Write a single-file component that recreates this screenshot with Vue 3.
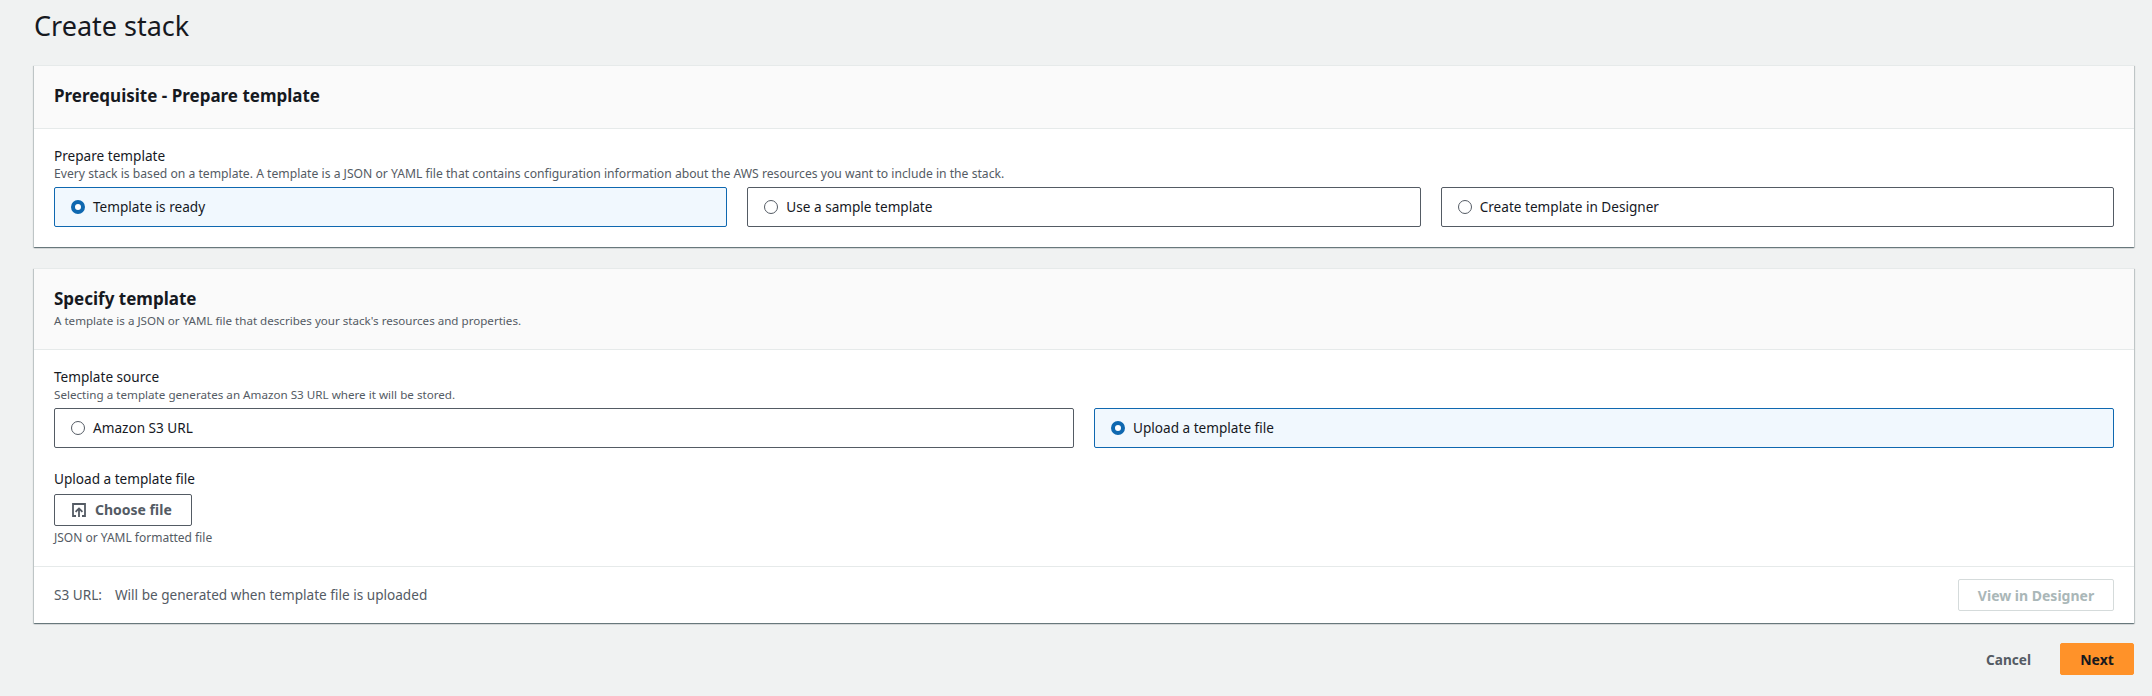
<template>
  <div class="page">
    <h1 class="title">Create stack</h1>

    <section class="card first">
      <header class="card-head prereq">
        <h2>Prerequisite - Prepare template</h2>
      </header>
      <div class="card-body">
        <div class="label">Prepare template</div>
        <div class="hint wide">Every stack is based on a template. A template is a JSON or YAML file that contains configuration information about the AWS resources you want to include in the stack.</div>
        <div class="tiles three">
          <label v-for="o in prepareOptions" :key="o" class="tile" :class="{ selected: o === prepare }">
            <span class="radio"></span>
            <span class="tile-text">{{ o }}</span>
          </label>
        </div>
      </div>
    </section>

    <section class="card second">
      <header class="card-head spec">
        <h2>Specify template</h2>
        <p>A template is a JSON or YAML file that describes your stack's resources and properties.</p>
      </header>
      <div class="card-body source">
        <div class="label">Template source</div>
        <div class="hint narrow">Selecting a template generates an Amazon S3 URL where it will be stored.</div>
        <div class="tiles two">
          <label v-for="o in sourceOptions" :key="o" class="tile" :class="{ selected: o === source }">
            <span class="radio"></span>
            <span class="tile-text">{{ o }}</span>
          </label>
        </div>
        <div class="label upload-label">Upload a template file</div>
        <button class="btn choose">
          <svg width="14" height="14" viewBox="0 0 14 14" fill="none" stroke="currentColor" stroke-width="1.8">
            <path d="M4 13H1V1h12v12h-3" />
            <path d="M7 14V5.5M3.6 8.8 7 5.4l3.4 3.4" />
          </svg>
          <span class="choose-text">Choose file</span>
        </button>
        <div class="hint file-hint">JSON or YAML formatted file</div>
      </div>
      <footer class="card-foot">
        <div class="s3"><span class="s3-key">S3 URL:</span>Will be generated when template file is uploaded</div>
        <button class="btn disabled">View in Designer</button>
      </footer>
    </section>

    <div class="actions">
      <button class="link">Cancel</button>
      <button class="btn primary">Next</button>
    </div>
  </div>
</template>

<script setup>
const prepareOptions = ['Template is ready', 'Use a sample template', 'Create template in Designer']
const prepare = 'Template is ready'
const sourceOptions = ['Amazon S3 URL', 'Upload a template file']
const source = 'Upload a template file'
</script>

<style>
html, body { margin: 0; background: #f0f2f2; }
</style>

<style scoped>
.page {
  width: 2152px;
  height: 696px;
  box-sizing: border-box;
  padding: 0 18px 0 34px;
  overflow: hidden;
  background: #f0f2f2;
  font-family: "Noto Sans", "Open Sans", sans-serif;
  color: #16191f;
}
.title {
  margin: 0;
  height: 65px;
  padding-top: 8px;
  box-sizing: border-box;
  font-size: 27px;
  line-height: 36px;
  font-weight: 400;
}
.card {
  box-sizing: border-box;
  background: #fff;
  border-top: 1px solid #e6eaea;
  box-shadow: 0 1px 1px 0 rgba(0, 28, 36, .4), 1px 1px 1px 0 rgba(0, 28, 36, .15), -1px 1px 1px 0 rgba(0, 28, 36, .15);
}
.first { height: 182px; }
.second { height: 355px; margin-top: 21px; }
.card-head {
  box-sizing: border-box;
  padding: 0 20px;
  background: #fafafa;
  border-bottom: 1px solid #e6eaea;
}
.prereq { height: 63px; display: flex; align-items: center; padding-bottom: 2px; }
.spec { height: 81px; padding-top: 18px; }
.card-head h2 {
  margin: 0;
  font-size: 17px;
  line-height: 24px;
  font-weight: 700;
}
.spec p {
  margin: 2px 0 0;
  font-size: 11.6px;
  line-height: 16px;
  color: #545b64;
}
.card-body { padding: 17px 20px 0; }
.source { height: 216px; box-sizing: border-box; }
.label { font-size: 13.6px; line-height: 19px; }
.hint { margin-top: 1px; font-size: 12px; line-height: 16px; color: #545b64; }
.wide { font-size: 12.16px; }
.narrow { font-size: 11.65px; }
.tiles { display: grid; gap: 20px; margin-top: 5px; }
.three { grid-template-columns: repeat(3, 1fr); }
.two { grid-template-columns: repeat(2, 1fr); }
.tile {
  display: flex;
  align-items: center;
  gap: 8px;
  height: 40px;
  box-sizing: border-box;
  padding: 0 16px;
  border: 1px solid #545b64;
  border-radius: 2px;
  font-size: 13.6px;
}
.tile-text { margin-top: -2px; }
.tile.selected { background: #f1f8fe; border-color: #0f68b0; }
.radio {
  width: 14px;
  height: 14px;
  box-sizing: border-box;
  border: 1px solid #545b64;
  border-radius: 50%;
  background: #fff;
}
.selected .radio { border: 4px solid #0f68b0; }
.upload-label { margin-top: 21px; }
.btn {
  box-sizing: border-box;
  height: 32px;
  border-radius: 2px;
  font-family: inherit;
  font-size: 14px;
  font-weight: 700;
}
.choose {
  display: flex;
  align-items: center;
  gap: 9px;
  width: 138px;
  margin-top: 6px;
  padding: 0 0 0 17px;
  background: #fff;
  border: 1px solid #545b64;
  color: #545b64;
}
.choose-text { margin-top: -2px; }
.file-hint { margin-top: 4px; }
.card-foot {
  box-sizing: border-box;
  height: 57px;
  padding: 0 20px;
  display: flex;
  align-items: center;
  justify-content: space-between;
  border-top: 1px solid #e6eaea;
}
.s3 { font-size: 13.6px; color: #545b64; margin-top: -1px; }
.s3-key { margin-right: 13px; }
.disabled {
  width: 156px;
  background: #fff;
  border: 1px solid #d5dbdb;
  color: #aab7b8;
}
.actions {
  display: flex;
  justify-content: flex-end;
  align-items: center;
  gap: 29px;
  margin-top: 20px;
}
.link {
  padding: 0;
  border: 0;
  background: none;
  font-family: inherit;
  font-size: 13.6px;
  font-weight: 700;
  color: #545b64;
}
.primary {
  width: 74px;
  background: #ff9229;
  border: 1px solid #ff9229;
  color: #16191f;
}
</style>
